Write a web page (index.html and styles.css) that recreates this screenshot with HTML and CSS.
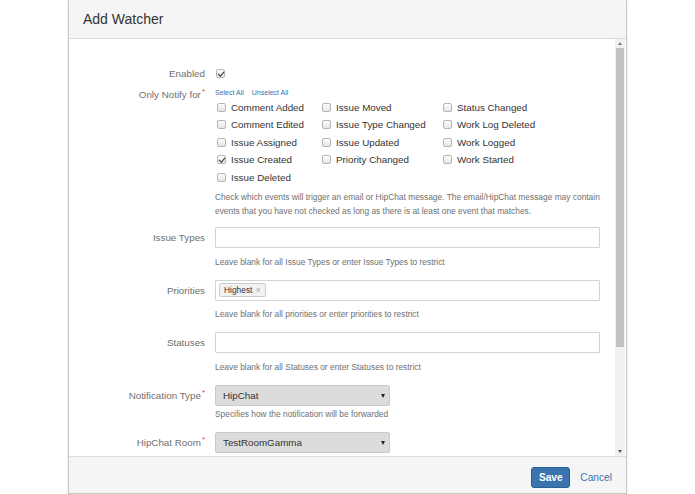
FILE: index.html
```html
<!DOCTYPE html>
<html>
<head>
<meta charset="utf-8">
<link rel="stylesheet" href="styles.css">
</head>
<body>
<div class="dialog">
  <div class="header">Add Watcher</div>
  <div class="body">
    <div class="content">
      <div class="row r-enabled">
        <div class="label">Enabled</div>
        <div class="field"><span class="cb checked"></span></div>
      </div>
      <div class="row r-notify">
        <div class="label">Only Notify for<span class="req">*</span></div>
        <div class="field">
          <div class="links"><a>Select All</a><a>Unselect All</a></div>
          <div class="events">
            <div class="ev"><span class="cb"></span>Comment Added</div>
            <div class="ev"><span class="cb"></span>Issue Moved</div>
            <div class="ev"><span class="cb"></span>Status Changed</div>
            <div class="ev"><span class="cb"></span>Comment Edited</div>
            <div class="ev"><span class="cb"></span>Issue Type Changed</div>
            <div class="ev"><span class="cb"></span>Work Log Deleted</div>
            <div class="ev"><span class="cb"></span>Issue Assigned</div>
            <div class="ev"><span class="cb"></span>Issue Updated</div>
            <div class="ev"><span class="cb"></span>Work Logged</div>
            <div class="ev"><span class="cb checked"></span>Issue Created</div>
            <div class="ev"><span class="cb"></span>Priority Changed</div>
            <div class="ev"><span class="cb"></span>Work Started</div>
            <div class="ev"><span class="cb"></span>Issue Deleted</div>
          </div>
          <div class="help h-events">Check which events will trigger an email or HipChat message. The email/HipChat message may contain events that you have not checked as long as there is at least one event that matches.</div>
        </div>
      </div>
      <div class="row r-input">
        <div class="label">Issue Types</div>
        <div class="field">
          <div class="input"></div>
          <div class="help">Leave blank for all Issue Types or enter Issue Types to restrict</div>
        </div>
      </div>
      <div class="row r-input">
        <div class="label">Priorities</div>
        <div class="field">
          <div class="input"><span class="tag">Highest <span class="x">×</span></span></div>
          <div class="help">Leave blank for all priorities or enter priorities to restrict</div>
        </div>
      </div>
      <div class="row r-input">
        <div class="label">Statuses</div>
        <div class="field">
          <div class="input"></div>
          <div class="help">Leave blank for all Statuses or enter Statuses to restrict</div>
        </div>
      </div>
      <div class="row r-input">
        <div class="label">Notification Type<span class="req">*</span></div>
        <div class="field">
          <div class="select">HipChat<span class="arrow"></span></div>
          <div class="help h-select">Specifies how the notification will be forwarded</div>
        </div>
      </div>
      <div class="row r-input">
        <div class="label">HipChat Room<span class="req">*</span></div>
        <div class="field">
          <div class="select">TestRoomGamma<span class="arrow"></span></div>
        </div>
      </div>
    </div>
    <div class="scrollbar">
      <div class="sb-up"></div>
      <div class="sb-track"><div class="sb-thumb"></div></div>
      <div class="sb-down"></div>
    </div>
  </div>
  <div class="footer">
    <button class="save">Save</button>
    <a class="cancel">Cancel</a>
  </div>
</div>
</body>
</html>
```
FILE: styles.css
```css
* { box-sizing: border-box; }
html, body { margin: 0; padding: 0; background: #fff; }
body {
  font-family: "Liberation Sans", Arial, sans-serif;
  color: #333;
  width: 695px;
  height: 494px;
  overflow: hidden;
}
.dialog {
  margin-left: 68px;
  width: 559px;
  height: 494px;
  border-left: 1px solid #c8c8c8;
  border-right: 1px solid #c8c8c8;
  border-bottom: 1px solid #c8c8c8;
  display: flex;
  flex-direction: column;
  box-shadow: 0 0 2px rgba(0,0,0,0.15);
}
.header {
  height: 39px;
  flex: none;
  background: #f5f5f5;
  border-bottom: 1px solid #dcdcdc;
  padding-left: 14px;
  font-size: 14px;
  line-height: 38px;
  color: #333;
}
.body {
  flex: 1;
  display: flex;
  min-height: 0;
}
.content {
  flex: 1;
  overflow: hidden;
  padding-top: 26px;
}
.row {
  display: grid;
  grid-template-columns: 136px 1fr;
  column-gap: 10px;
}
.label {
  text-align: right;
  font-size: 9.8px;
  color: #6f6f6f;
  white-space: nowrap;
}
.req {
  color: #d04437;
  font-size: 8px;
  position: relative;
  top: -4px;
  margin-left: 1px;
}
.r-enabled { height: 16px; align-items: center; }
.r-enabled .label { line-height: 17px; }
.r-enabled .field { display: flex; align-items: center; padding-left: 1px; }
.r-notify { margin-top: 6px; }
.r-notify .label { line-height: 15px; }
.links { height: 11px; line-height: 11px; font-size: 7px; }
.links a { color: #3b73af; margin-right: 8px; }
.events {
  display: grid;
  grid-template-columns: 105px 121px 1fr;
  grid-auto-rows: 17.5px;
  margin-top: 0.5px;
  padding-left: 2px;
}
.ev {
  display: flex;
  align-items: center;
  font-size: 9.8px;
  color: #333;
  white-space: nowrap;
}
.cb {
  width: 9px;
  height: 9px;
  border: 1px solid #b5b5b5;
  border-radius: 2px;
  background: linear-gradient(#fdfdfd, #e6e6e6);
  margin-right: 5px;
  flex: none;
  position: relative;
  display: inline-block;
}
.cb.checked::after {
  content: "";
  position: absolute;
  left: 2px;
  top: 0px;
  width: 2.5px;
  height: 5px;
  border-right: 1.5px solid #333;
  border-bottom: 1.5px solid #333;
  transform: rotate(40deg);
}
.help {
  font-size: 8.4px;
  line-height: 14px;
  height: 14px;
  color: #707070;
  margin-top: 6.5px;
  white-space: nowrap;
}
.h-events { margin-top: 4px; height: 28px; white-space: normal; }
.h-select { margin-top: 1.5px; }
.r-input { margin-top: 11px; }
.r-notify + .r-input { margin-top: 9px; }
.r-input .label { line-height: 21px; }
.input {
  width: 385px;
  height: 21px;
  border: 1px solid #d3d3d3;
  border-radius: 1px;
  background: #fff;
  display: flex;
  align-items: center;
  padding-left: 3px;
}
.tag {
  height: 14px;
  line-height: 12px;
  padding: 0 4px 0 4px;
  font-size: 8.4px;
  color: #333;
  background: #f2f2f2;
  border: 1px solid #ccc;
  border-radius: 2px;
}
.tag .x { color: #999; margin-left: 1px; }
.select {
  width: 175px;
  height: 21px;
  border: 1px solid #cacaca;
  border-radius: 2px;
  background: #dcdcdc;
  font-size: 9.8px;
  color: #333;
  line-height: 19px;
  padding-left: 7px;
  position: relative;
}
.arrow {
  position: absolute;
  right: 4px;
  top: 8px;
  width: 0;
  height: 0;
  border-left: 2.5px solid transparent;
  border-right: 2.5px solid transparent;
  border-top: 4px solid #222;
}
.scrollbar {
  width: 10px;
  flex: none;
  background: #f1f1f1;
  display: flex;
  flex-direction: column;
  margin-right: 1px;
}
.sb-up, .sb-down {
  height: 9px;
  flex: none;
  position: relative;
}
.sb-up::after, .sb-down::after {
  content: "";
  position: absolute;
  left: 2.5px;
  width: 0; height: 0;
  border-left: 2.5px solid transparent;
  border-right: 2.5px solid transparent;
}
.sb-up::after { top: 3px; border-bottom: 3px solid #777; }
.sb-down::after { top: 3px; border-top: 3px solid #555; }
.sb-track { flex: 1; padding: 0 1px; }
.sb-thumb { height: 299px; background: #c1c1c1; }
.footer {
  height: 37px;
  flex: none;
  background: #f5f5f5;
  border-top: 1px solid #dcdcdc;
  display: flex;
  justify-content: flex-end;
  align-items: center;
  padding-right: 14px;
  padding-top: 4px;
}
.save {
  font-family: "Liberation Sans", Arial, sans-serif;
  height: 21px;
  width: 39px;
  padding: 0;
  border: 1px solid #2a5f95;
  border-radius: 3px;
  background: #3b73af;
  color: #fff;
  font-weight: bold;
  font-size: 10.2px;
  margin-right: 10px;
}
.cancel {
  color: #3b73af;
  font-size: 10.2px;
}
```
